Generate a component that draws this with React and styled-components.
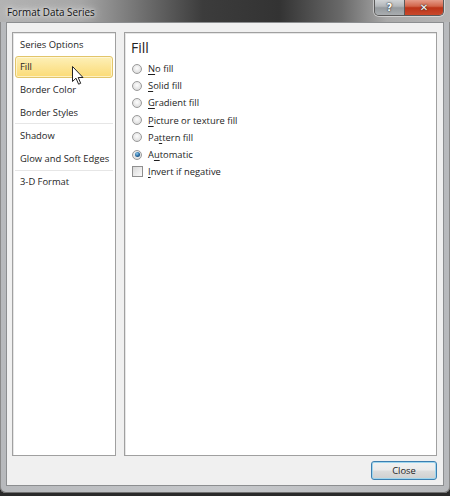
import React from 'react'
import styled, { createGlobalStyle } from 'styled-components'

const GlobalStyle = createGlobalStyle`
  html, body {
    margin: 0;
    padding: 0;
    background: #2a2a2a;
  }
  body {
    font-family: 'Open Sans', 'Noto Sans', sans-serif;
    font-size: 9.4px;
    color: #1e1e1e;
  }
`

const Window = styled.div`
  width: 450px;
  height: 493px;
  display: flex;
  flex-direction: column;
  background: linear-gradient(90deg, #b7b9bc 0%, #c6c8cb 50%, #b7b9bc 100%);
  border-radius: 0 0 6px 6px;
  box-shadow: inset 0 -1px 0 #707070, inset 1px 0 0 #8a8a8a, inset -1px 0 0 #8a8a8a;
`

const TitleBar = styled.div`
  height: 22px;
  flex: none;
  display: flex;
  align-items: flex-start;
  justify-content: space-between;
  padding: 0 6px 0 7px;
  background: linear-gradient(
    90deg,
    #b3b3b3 0%,
    #a6a6a6 18%,
    #6e6e6e 32%,
    #3c3c3c 45%,
    #333333 62%,
    #6a6a6a 76%,
    #a9a9a9 86%,
    #b5b5b5 100%
  );
`

const Title = styled.span`
  margin-top: 5px;
  font-size: 9.9px;
  color: #111;
  text-shadow: 0 0 6px #e8e8e8, 0 0 10px #d8d8d8, 0 0 3px #ececec;
`

const CaptionButtons = styled.div`
  display: flex;
  margin-top: -1px;
  border: 1px solid #5a5a5a;
  border-top: none;
  border-radius: 0 0 5px 5px;
  overflow: hidden;
  box-shadow: 0 0 0 1px rgba(255, 255, 255, 0.45);
`

const CaptionButton = styled.div`
  width: ${(p) => (p.wide ? '38px' : '29px')};
  height: 16px;
  display: flex;
  align-items: center;
  justify-content: center;
  color: #fff;
  font-family: 'DejaVu Sans', sans-serif;
  font-weight: 700;
  font-size: 10px;
  text-shadow: 0 0 2px #333, 0 0 1px #222;
  background: ${(p) =>
    p.danger
      ? 'linear-gradient(180deg, #e8a493 0%, #d2664b 45%, #bc3418 55%, #c9482b 100%)'
      : 'linear-gradient(180deg, #d5d8da 0%, #b3b7ba 45%, #959a9e 55%, #a9adb0 100%)'};
  & + & {
    border-left: 1px solid #5a5a5a;
  }
`

const Client = styled.div`
  flex: 1;
  margin: 0 6px 7px 6px;
  background: #f0f0f0;
  border: 1px solid #8c8e90;
  display: flex;
  flex-direction: column;
  padding: 9px 6px 5px 5px;
`

const Panels = styled.div`
  flex: 1;
  display: flex;
  gap: 8px;
`

const Panel = styled.div`
  position: relative;
  box-sizing: border-box;
  background: #fff;
  border: 1px solid #a0a0a0;
  box-shadow: inset 1px 1px 0 #e6e6e6;
  ${(p) => (p.nav ? 'width: 104px; flex: none; padding: 0 1px;' : 'flex: 1; padding: 6px 6px;')}
`

const NavGroup = styled.div`
  display: flex;
  flex-direction: column;
  border-bottom: ${(p) => (p.last ? 'none' : '1px solid #e6e6e6')};
  margin: 0 1px;
`

const NavItem = styled.div`
  height: 22.6px;
  display: flex;
  align-items: center;
  padding-left: 5px;
  box-sizing: border-box;
  border-radius: 3px;
  ${(p) =>
    p.selected &&
    `
    border: 1px solid #e2c56a;
    padding-left: 4px;
    background: linear-gradient(180deg, #fdf0b8 0%, #fce69a 45%, #fbdb76 100%);
    box-shadow: inset 0 0 0 1px rgba(255, 250, 225, 0.7);
  `}
`

const Cursor = styled.svg`
  position: absolute;
  left: 59px;
  top: 33px;
  width: 12px;
  height: 19px;
`

const Heading = styled.div`
  font-size: 14px;
  color: #222;
  margin: 0 0 3px 0;
  line-height: 18px;
`

const Options = styled.div`
  display: flex;
  flex-direction: column;
  padding-left: 1px;
`

const Option = styled.div`
  height: 17.2px;
  display: flex;
  align-items: center;
  gap: 6px;
`

const Radio = styled.span`
  width: 10px;
  height: 10px;
  flex: none;
  border-radius: 50%;
  box-sizing: border-box;
  border: 1px solid #9a9a9a;
  background: radial-gradient(circle at 50% 40%, #fdfdfd 0%, #e4e4e4 60%, #cfcfcf 100%);
  display: flex;
  align-items: center;
  justify-content: center;
  &::after {
    content: '';
    display: ${(p) => (p.checked ? 'block' : 'none')};
    width: 5px;
    height: 5px;
    border-radius: 50%;
    background: radial-gradient(circle at 40% 35%, #8ecbf0 0%, #1d5f96 60%, #113e66 100%);
  }
`

const Check = styled.span`
  width: 11px;
  height: 11px;
  flex: none;
  box-sizing: border-box;
  border: 1px solid #8f8f8f;
  background: linear-gradient(135deg, #d8d8d8 0%, #eeeeee 60%, #fafafa 100%);
  margin-left: -0.5px;
  margin-right: -0.5px;
`

const Key = styled.span`
  text-decoration: underline;
  text-underline-offset: 1.5px;
`

const Footer = styled.div`
  display: flex;
  justify-content: flex-end;
  padding-top: 5px;
`

const Button = styled.div`
  width: 66px;
  height: 19px;
  box-sizing: border-box;
  display: flex;
  align-items: center;
  justify-content: center;
  border: 1px solid #3c7fb1;
  border-radius: 3px;
  background: linear-gradient(180deg, #f2f2f2 0%, #ebebeb 49%, #dddddd 51%, #cfcfcf 100%);
  box-shadow: inset 0 0 0 1px #9fd6ee;
`

const navGroups = [
  ['Series Options', 'Fill', 'Border Color', 'Border Styles'],
  ['Shadow', 'Glow and Soft Edges'],
  ['3-D Format'],
]

const fillOptions = [
  { pre: '', key: 'N', post: 'o fill' },
  { pre: '', key: 'S', post: 'olid fill' },
  { pre: '', key: 'G', post: 'radient fill' },
  { pre: '', key: 'P', post: 'icture or texture fill' },
  { pre: 'Pa', key: 't', post: 'tern fill' },
  { pre: 'A', key: 'u', post: 'tomatic', checked: true },
]

export default function App() {
  return (
    <>
      <GlobalStyle />
      <Window>
        <TitleBar>
          <Title>Format Data Series</Title>
          <CaptionButtons>
            <CaptionButton>?</CaptionButton>
            <CaptionButton wide danger>
              ✕
            </CaptionButton>
          </CaptionButtons>
        </TitleBar>
        <Client>
          <Panels>
            <Panel nav>
              {navGroups.map((group, i) => (
                <NavGroup key={i} last={i === navGroups.length - 1}>
                  {group.map((label) => (
                    <NavItem key={label} selected={label === 'Fill'}>
                      {label}
                    </NavItem>
                  ))}
                </NavGroup>
              ))}
              <Cursor viewBox="0 0 12 19">
                <path
                  d="M0.5 0.5 L0.5 15.5 L4 12.2 L6.6 18.2 L8.7 17.3 L6.2 11.5 L11 11.5 Z"
                  fill="#fff"
                  stroke="#222"
                  strokeWidth="1"
                  strokeLinejoin="round"
                />
              </Cursor>
            </Panel>
            <Panel>
              <Heading>Fill</Heading>
              <Options>
                {fillOptions.map((o) => (
                  <Option key={o.post}>
                    <Radio checked={o.checked} />
                    <span>
                      {o.pre}
                      <Key>{o.key}</Key>
                      {o.post}
                    </span>
                  </Option>
                ))}
                <Option>
                  <Check />
                  <span>
                    <Key>I</Key>nvert if negative
                  </span>
                </Option>
              </Options>
            </Panel>
          </Panels>
          <Footer>
            <Button>Close</Button>
          </Footer>
        </Client>
      </Window>
    </>
  )
}
